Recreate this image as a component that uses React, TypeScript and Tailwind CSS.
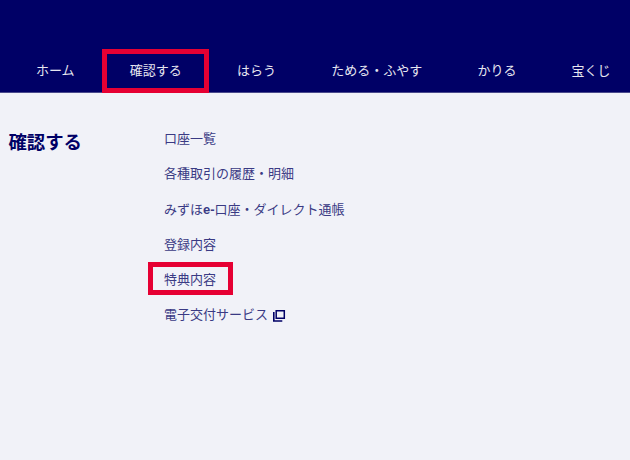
const navItems = ["ホーム", "確認する", "はらう", "ためる・ふやす", "かりる", "宝くじ"];

const links = ["口座一覧", "各種取引の履歴・明細", "みずほe-口座・ダイレクト通帳", "登録内容", "特典内容", "電子交付サービス"];

const font = "font-['Liberation_Sans','Noto_Sans_CJK_JP',sans-serif]";

function ExternalIcon() {
	return (
		<svg width="13" height="13" viewBox="0 0 13 13" fill="none" className="ml-[5px] mt-[2px]">
			<path d="M3.2 1.7h8.1v7.6H3.2z" stroke="#000066" strokeWidth="1.5" />
			<path d="M.8 3v9h8.5" stroke="#000066" strokeWidth="1.6" />
		</svg>
	);
}

export default function App() {
	return (
		<div className={`w-[630px] h-[460px] overflow-hidden bg-[#f1f2f8] ${font}`}>
			<header className="h-[93px] bg-[#000066] border-b border-[#4a4a8c] flex items-end pl-[8.4px] whitespace-nowrap">
				{navItems.map((item, i) => (
					<div key={item} className="relative h-[43px] px-[27.6px] flex items-center text-[13px] text-[#e6e6f0]">
						{item}
						{i === 1 && <div className="absolute inset-0 -bottom-px border-[5px] border-[#e60033]" />}
					</div>
				))}
			</header>
			<main className="flex pt-[28.2px]">
				<h1 className="w-[164px] pl-[8.4px] pt-[1.8px] text-[18.4px] leading-[40px] font-bold text-[#000066]">確認する</h1>
				<ul className="flex flex-col text-[13px] leading-[35.2px] text-[#3a3a84]">
					{links.map((link, i) => (
						<li key={link} className="relative flex items-center">
							{link === "みずほe-口座・ダイレクト通帳" ? (
								<span>みずほ<span className="font-bold">e-</span>口座・ダイレクト通帳</span>
							) : (
								link
							)}
							{i === 5 && <ExternalIcon />}
							{i === 4 && <div className="absolute left-[-16px] top-[-0.2px] w-[85px] h-[33px] border-[5px] border-[#e60033]" />}
						</li>
					))}
				</ul>
			</main>
		</div>
	);
}
